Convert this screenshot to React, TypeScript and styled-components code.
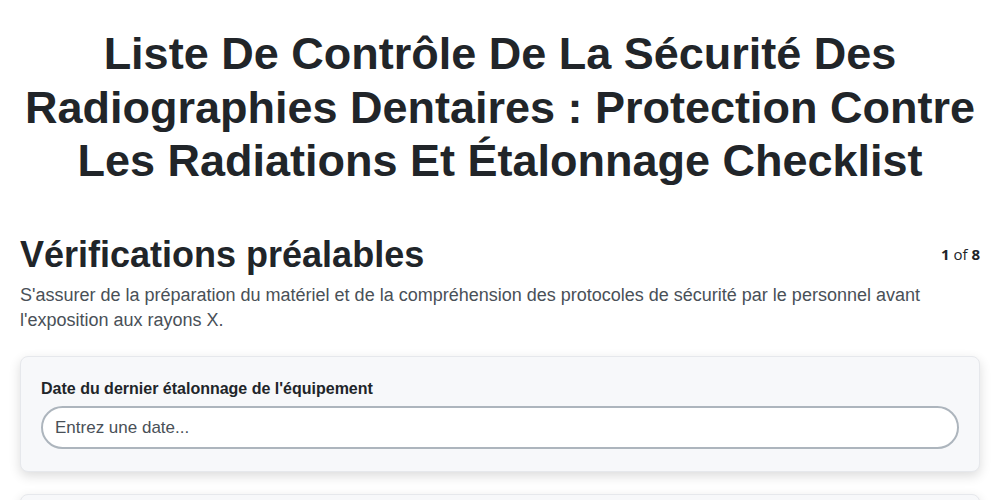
import React from "react";
import styled, { createGlobalStyle } from "styled-components";

const GlobalStyle = createGlobalStyle`
  body {
    margin: 0;
    background: #ffffff;
    color: #212529;
    font-family: "Liberation Sans", Arial, sans-serif;
  }
`;

const Page = styled.div`
  padding: 27px 20px 40px;
`;

const Title = styled.h1`
  margin: 0 0 45px;
  font-size: 45px;
  line-height: 1.19;
  font-weight: 700;
  text-align: center;
  color: #212529;
`;

const SectionHead = styled.div`
  display: flex;
  align-items: center;
  justify-content: space-between;
`;

const SectionTitle = styled.h2`
  margin: 0;
  font-size: 36px;
  line-height: 1.2;
  font-weight: 700;
`;

const Counter = styled.span`
  font-family: "Open Sans", "Noto Sans", sans-serif;
  font-size: 15px;
  color: #212529;

  b {
    font-weight: 700;
  }
`;

const Description = styled.p`
  margin: 7px 0 23px;
  font-size: 18px;
  line-height: 1.4;
  color: #495057;
`;

const Questions = styled.div`
  display: flex;
  flex-direction: column;
  gap: 22px;
`;

const Card = styled.div`
  background: #f7f8fa;
  border: 1px solid #e6e8ec;
  border-radius: 8px;
  padding: 20px 20px 22px;
  box-shadow: 0 4px 12px rgba(0, 0, 0, 0.14);
  min-height: 60px;
`;

const Label = styled.label`
  display: block;
  margin-bottom: 5px;
  font-size: 16px;
  line-height: 1.5;
  font-weight: 700;
  color: #212529;
`;

const TextInput = styled.input`
  box-sizing: border-box;
  width: 100%;
  height: 43px;
  padding: 0 12px;
  border: 2px solid #adb5bd;
  border-radius: 22px;
  background: #ffffff;
  font-family: "Liberation Sans", Arial, sans-serif;
  font-size: 17px;
  color: #212529;
  outline: none;

  &::placeholder {
    color: #495057;
  }
`;

export default function App() {
  return (
    <>
      <GlobalStyle />
      <Page>
        <Title>
          Liste De Contrôle De La Sécurité Des Radiographies Dentaires :
          Protection Contre Les Radiations Et Étalonnage Checklist
        </Title>
        <SectionHead>
          <SectionTitle>Vérifications préalables</SectionTitle>
          <Counter>
            <b>1</b> of <b>8</b>
          </Counter>
        </SectionHead>
        <Description>
          S'assurer de la préparation du matériel et de la compréhension des
          protocoles de sécurité par le personnel avant l'exposition aux rayons X.
        </Description>
        <Questions>
          <Card>
            <Label htmlFor="calibration-date">
              Date du dernier étalonnage de l'équipement
            </Label>
            <TextInput id="calibration-date" placeholder="Entrez une date..." />
          </Card>
          <Card>
            <Label htmlFor="operator">Nom de l'opérateur</Label>
            <TextInput id="operator" placeholder="Entrez un nom..." />
          </Card>
        </Questions>
      </Page>
    </>
  );
}
